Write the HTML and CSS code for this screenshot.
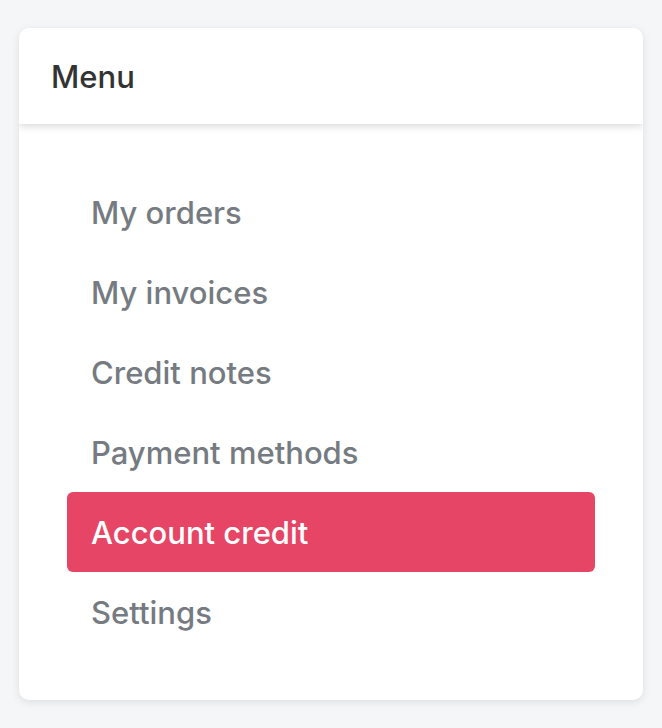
FILE: index.html
```html
<!DOCTYPE html>
<html lang="en">
  <head>
    <meta charset="UTF-8" />
    <meta name="viewport" content="width=device-width, initial-scale=1.0" />
    <title>Account credit</title>
    <link rel="stylesheet" href="styles.css">
  </head>
  <body>
    <aside class="card">
      <div class="card-header">
        <h2 class="card-title">Menu</h2>
      </div>
      <nav class="card-body">
        <ul class="menu">
          <li><a class="menu-link" href="#orders">My orders</a></li>
          <li><a class="menu-link" href="#invoices">My invoices</a></li>
          <li><a class="menu-link" href="#notes">Credit notes</a></li>
          <li><a class="menu-link" href="#payment">Payment methods</a></li>
          <li><a class="menu-link active" href="#credit" aria-current="page">Account credit</a></li>
          <li><a class="menu-link" href="#settings">Settings</a></li>
        </ul>
      </nav>
    </aside>
  </body>
</html>
```

FILE: styles.css
```css
* {
  margin: 0;
  padding: 0;
  box-sizing: border-box;
}
body {
  padding: 28px 19px;
  background-color: #f5f6f8;
  font-family: Inter, "Liberation Sans", sans-serif;
  font-size: 31px;
  font-weight: 450;
  line-height: 48px;
}
.card {
  overflow: hidden;
  background-color: #fff;
  border-radius: 10px;
  box-shadow: 0 2px 8px rgba(0, 0, 0, 0.1);
}
.card-header {
  padding: 25px 32px 23px;
  box-shadow: 0 2px 8px rgba(0, 0, 0, 0.16);
}
.card-title {
  color: #333;
  font-size: 31px;
  font-weight: 450;
}
.card-body {
  padding: 48px;
}
.menu {
  list-style: none;
}
.menu-link {
  display: block;
  padding: 17px 24px 15px;
  border-radius: 6px;
  color: #757b81;
  text-decoration: none;
}
.menu-link.active {
  background-color: #e64565;
  color: #fff;
}
```
